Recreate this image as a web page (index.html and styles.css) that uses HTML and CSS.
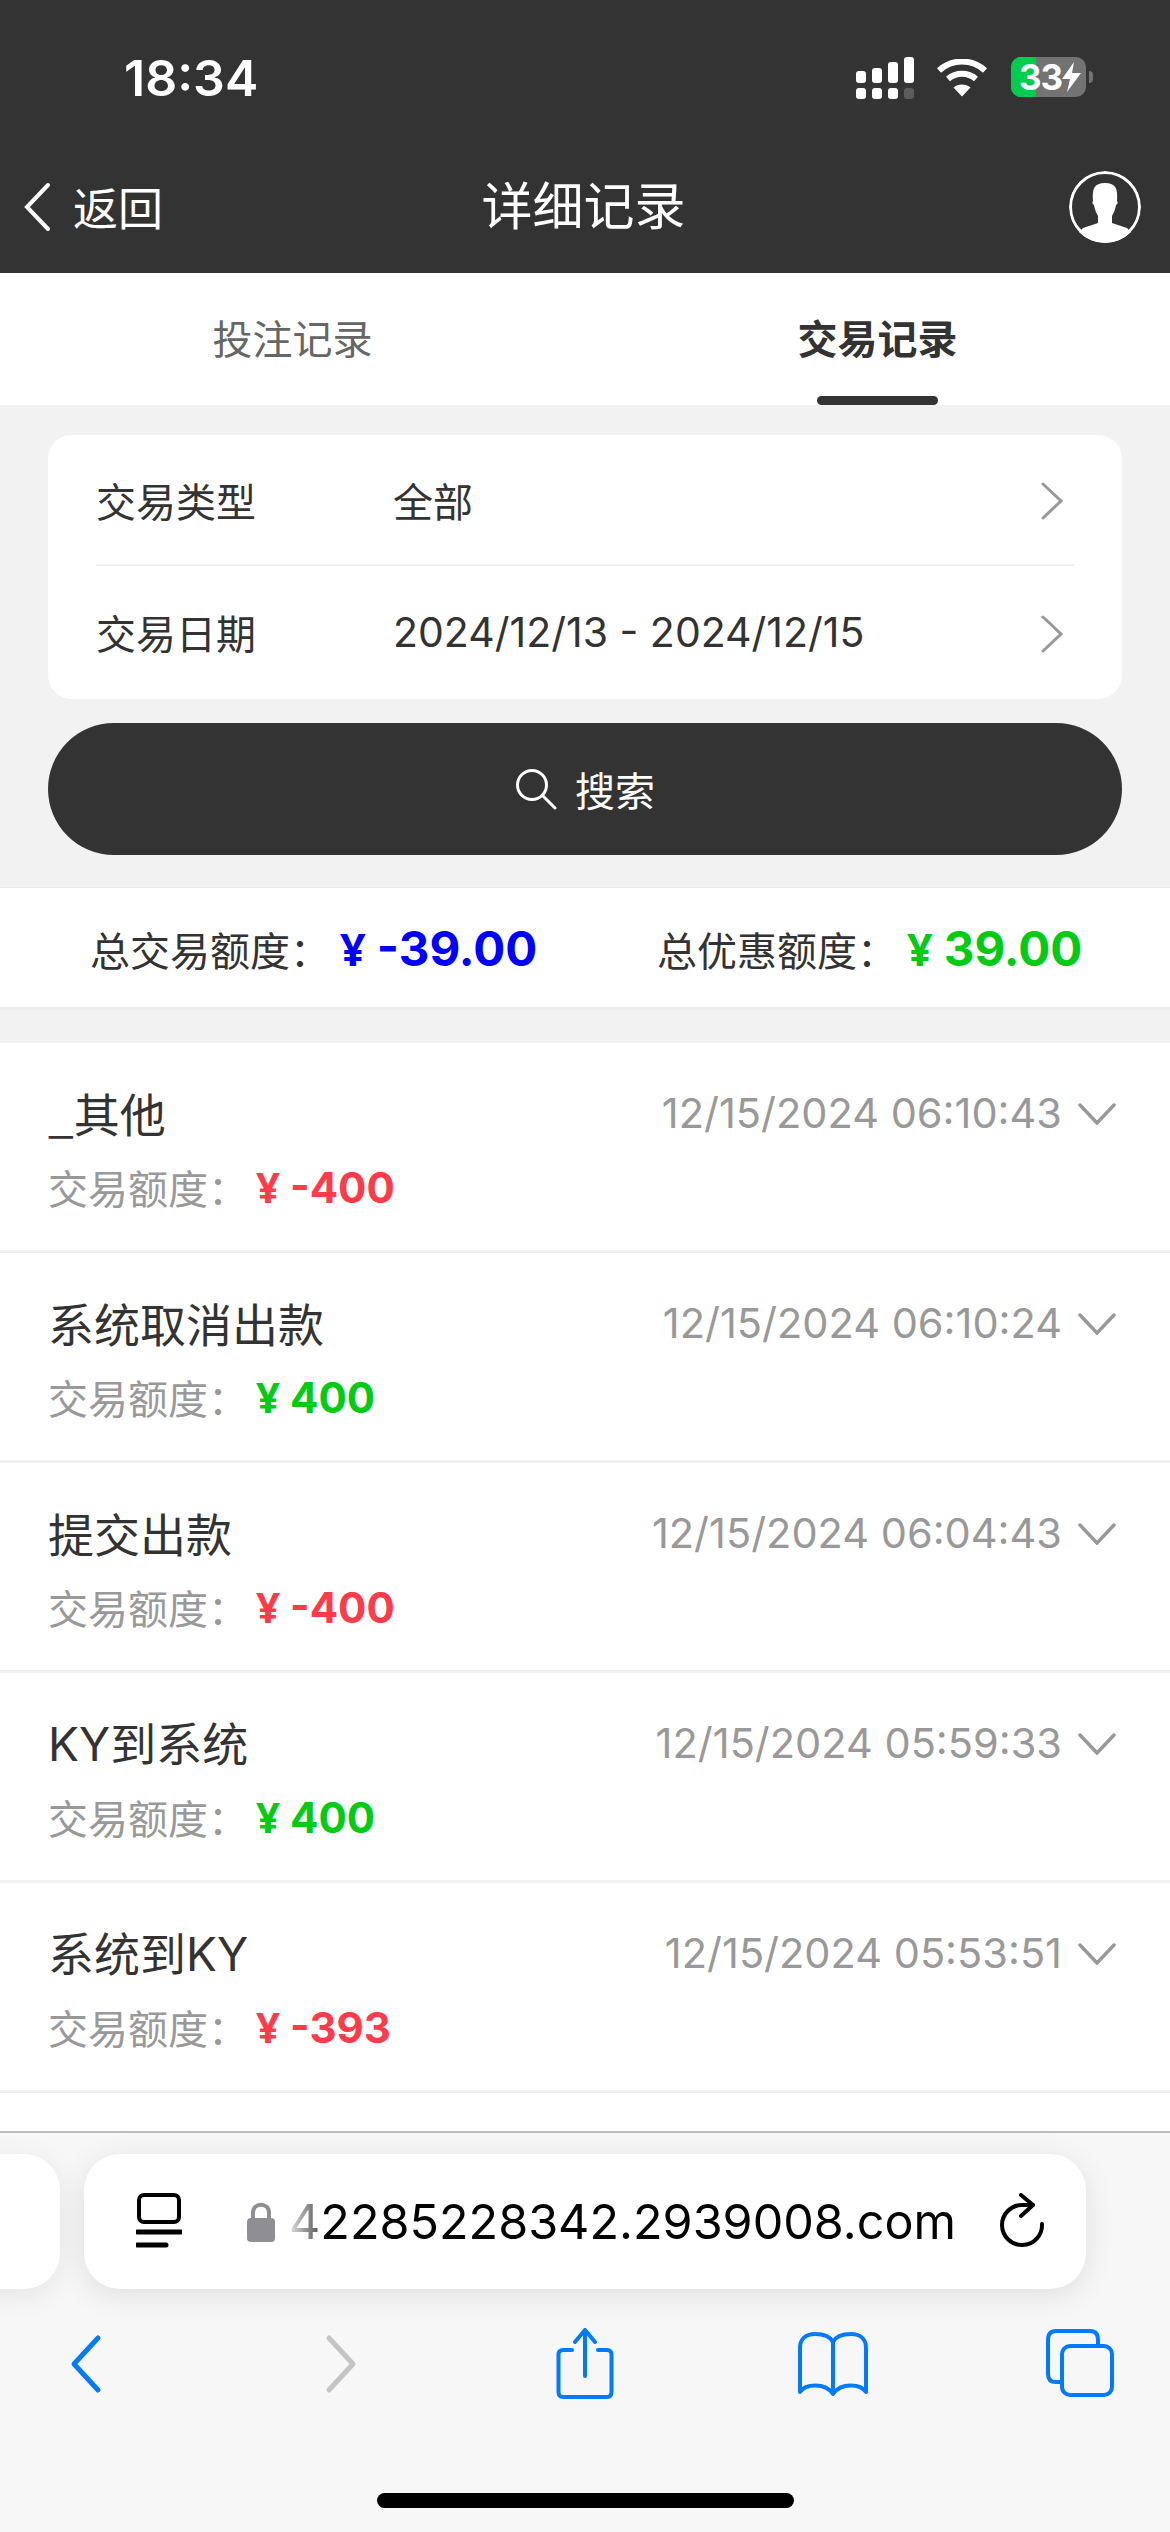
FILE: index.html
```html
<!DOCTYPE html>
<html lang="zh-CN">
<head>
    <meta charset="UTF-8">
    <meta name="viewport" content="width=device-width, initial-scale=1.0">
    <title>详细记录</title>
    <link rel="stylesheet" href="styles.css">
</head>
<body>
    <div class="app-container">
        <!-- Header -->
        <header class="app-header">
            <div class="status-bar">
                <span class="status-time">18:34</span>
                <div class="status-icons">
                    <svg class="icon-signal" width="60" height="42" viewBox="0 0 60 42" fill="#fff">
                        <rect x="0" y="14" width="10" height="12" rx="3"/>
                        <rect x="16" y="11" width="10" height="15" rx="3"/>
                        <rect x="32" y="5" width="10" height="21" rx="3"/>
                        <rect x="48" y="0" width="10" height="26" rx="3"/>
                        <rect x="0" y="31" width="10" height="11" rx="3"/>
                        <rect x="16" y="31" width="10" height="11" rx="3"/>
                        <rect x="32" y="31" width="10" height="11" rx="3"/>
                        <rect x="48" y="31" width="10" height="11" rx="3" fill="#5c5c5c"/>
                    </svg>
                    <svg class="icon-wifi" width="52" height="38" viewBox="0 0 52 38" fill="none" stroke="#fff" stroke-width="6">
                        <path d="M3 11.500C16 -0.500 36 -0.500 49 11.500"/>
                        <path d="M12 20C20 13 32 13 40 20"/>
                        <path d="M26 37.500L17.500 28.500C22 24.500 30 24.500 34.500 28.500Z" fill="#fff" stroke="none"/>
                    </svg>
                    <div class="battery">
                        <div class="battery-body">
                            <span class="battery-level"></span>
                            <span class="battery-num">33</span>
                            <svg width="20" height="30" viewBox="0 0 20 30" fill="#fff"><path d="M12 0L0 17H8L5 30L19 11H10Z"/></svg>
                        </div>
                        <span class="battery-nub"></span>
                    </div>
                </div>
            </div>
            <nav class="nav-bar">
                <div class="nav-back">
                    <svg width="28" height="50" viewBox="0 0 28 50" fill="none" stroke="#fff" stroke-width="4" stroke-linecap="round">
                        <path d="M25 3L4 25L25 47"/>
                    </svg>
                    <span>返回</span>
                </div>
                <h1 class="nav-title">详细记录</h1>
                <svg class="nav-user" width="72" height="72" viewBox="0 0 72 72">
                    <defs><clipPath id="userClip"><circle cx="36" cy="36" r="36"/></clipPath></defs>
                    <g clip-path="url(#userClip)">
                        <circle cx="36" cy="36" r="34.500" fill="none" stroke="#fff" stroke-width="3"/>
                        <path d="M36 12C25 12 23 18 24 30C23 31 23 33 25 34C26 40 28 43 29 45V52L14 57L0 72H72L58 57L43 52V45C44 43 46 40 47 34C49 33 49 31 48 30C49 18 47 12 36 12Z" fill="#fff"/>
                    </g>
                </svg>
            </nav>
        </header>

        <!-- Tabs -->
        <div class="tabs">
            <div class="tab">投注记录</div>
            <div class="tab active">交易记录</div>
        </div>

        <!-- Search form -->
        <section class="search-panel">
            <div class="filter-card">
                <div class="filter-row">
                    <span class="filter-label">交易类型</span>
                    <span class="filter-value">全部</span>
                    <svg class="filter-arrow" width="22" height="38" viewBox="0 0 22 38" fill="none" stroke="#999" stroke-width="3" stroke-linecap="round"><path d="M2 2L20 19L2 36"/></svg>
                </div>
                <div class="filter-row">
                    <span class="filter-label">交易日期</span>
                    <span class="filter-value filter-date">2024/12/13 - 2024/12/15</span>
                    <svg class="filter-arrow" width="22" height="38" viewBox="0 0 22 38" fill="none" stroke="#999" stroke-width="3" stroke-linecap="round"><path d="M2 2L20 19L2 36"/></svg>
                </div>
            </div>
            <button class="search-btn">
                <svg width="42" height="42" viewBox="0 0 42 42" fill="none" stroke="#fff" stroke-width="3" stroke-linecap="round">
                    <circle cx="17" cy="17" r="14.500"/>
                    <path d="M27.500 27.500L40 40"/>
                </svg>
                <span>搜索</span>
            </button>
        </section>

        <!-- Totals -->
        <div class="summary">
            <div class="summary-item summary-left">
                <span class="summary-label">总交易额度：</span>
                <span class="summary-amount blue"><i>¥</i>-39.00</span>
            </div>
            <div class="summary-item">
                <span class="summary-label">总优惠额度：</span>
                <span class="summary-amount green"><i>¥</i>39.00</span>
            </div>
        </div>

        <!-- Records -->
        <main class="record-list">
            <div class="record">
                <div class="record-top">
                    <span class="record-title">_其他</span>
                    <span class="record-time">12/15/2024 06:10:43</span>
                    <svg class="record-arrow" width="38" height="22" viewBox="0 0 38 22" fill="none" stroke="#999" stroke-width="3.500" stroke-linecap="round"><path d="M2 2L19 20L36 2"/></svg>
                </div>
                <div class="record-sub">交易额度：<span class="record-amount red"><i>¥</i>-400</span></div>
            </div>
            <div class="record">
                <div class="record-top">
                    <span class="record-title">系统取消出款</span>
                    <span class="record-time">12/15/2024 06:10:24</span>
                    <svg class="record-arrow" width="38" height="22" viewBox="0 0 38 22" fill="none" stroke="#999" stroke-width="3.500" stroke-linecap="round"><path d="M2 2L19 20L36 2"/></svg>
                </div>
                <div class="record-sub">交易额度：<span class="record-amount green"><i>¥</i>400</span></div>
            </div>
            <div class="record">
                <div class="record-top">
                    <span class="record-title">提交出款</span>
                    <span class="record-time">12/15/2024 06:04:43</span>
                    <svg class="record-arrow" width="38" height="22" viewBox="0 0 38 22" fill="none" stroke="#999" stroke-width="3.500" stroke-linecap="round"><path d="M2 2L19 20L36 2"/></svg>
                </div>
                <div class="record-sub">交易额度：<span class="record-amount red"><i>¥</i>-400</span></div>
            </div>
            <div class="record">
                <div class="record-top">
                    <span class="record-title"><span class="latin">KY</span>到系统</span>
                    <span class="record-time">12/15/2024 05:59:33</span>
                    <svg class="record-arrow" width="38" height="22" viewBox="0 0 38 22" fill="none" stroke="#999" stroke-width="3.500" stroke-linecap="round"><path d="M2 2L19 20L36 2"/></svg>
                </div>
                <div class="record-sub">交易额度：<span class="record-amount green"><i>¥</i>400</span></div>
            </div>
            <div class="record">
                <div class="record-top">
                    <span class="record-title">系统到<span class="latin">KY</span></span>
                    <span class="record-time">12/15/2024 05:53:51</span>
                    <svg class="record-arrow" width="38" height="22" viewBox="0 0 38 22" fill="none" stroke="#999" stroke-width="3.500" stroke-linecap="round"><path d="M2 2L19 20L36 2"/></svg>
                </div>
                <div class="record-sub">交易额度：<span class="record-amount red"><i>¥</i>-393</span></div>
            </div>
        </main>

        <!-- Browser toolbar -->
        <footer class="browser-bar">
            <div class="url-row">
                <div class="url-side"></div>
                <div class="url-pill">
                    <svg class="url-reader" width="46" height="56" viewBox="0 0 46 56" fill="none" stroke="#000" stroke-width="4">
                        <rect x="3" y="2" width="40" height="27" rx="5"/>
                        <path d="M1 39H45" stroke-width="5" stroke-linecap="round"/>
                        <path d="M1 52H30" stroke-width="5" stroke-linecap="round"/>
                    </svg>
                    <svg class="url-lock" width="28" height="40" viewBox="0 0 28 40">
                        <path d="M6 18V11C6 0 22 0 22 11V18" fill="none" stroke="#8e8e93" stroke-width="4"/>
                        <rect x="0" y="16" width="28" height="24" rx="4" fill="#8e8e93"/>
                    </svg>
                    <span class="url-text"><span class="url-fade">4</span>2285228342.2939008.com</span>
                    <svg class="url-reload" width="46" height="56" viewBox="0 0 46 56" fill="none" stroke="#000" stroke-width="4" stroke-linecap="round" stroke-linejoin="round">
                        <path d="M42 31A20 20 0 1 1 22 12H33"/>
                        <path d="M21 2L33 12L21 23"/>
                    </svg>
                </div>
            </div>
            <div class="browser-tools">
                <svg width="72" height="72" viewBox="0 0 72 72" fill="none" stroke="#007aff" stroke-width="5" stroke-linecap="round" stroke-linejoin="round">
                    <path d="M44 10L20 36L44 62"/>
                </svg>
                <svg width="72" height="72" viewBox="0 0 72 72" fill="none" stroke="#c4c4c6" stroke-width="5" stroke-linecap="round" stroke-linejoin="round">
                    <path d="M27 10L51 36L27 62"/>
                </svg>
                <svg width="72" height="72" viewBox="0 0 72 72" fill="none" stroke="#007aff" stroke-width="4" stroke-linecap="round" stroke-linejoin="round">
                    <path d="M23 22H14C11 22 9.500 24 9.500 26V64C9.500 67 11 69 14 69H58C61 69 62.500 67 62.500 64V26C62.500 24 61 22 58 22H49"/>
                    <path d="M36 48V2M26 14L36 2L46 14"/>
                </svg>
                <svg width="72" height="72" viewBox="0 0 72 72" fill="none" stroke="#007aff" stroke-width="4" stroke-linejoin="round">
                    <path d="M36 14C33 8 26 6 18 6C8 6 3 12 3 20V64C8 56 28 54 36 66C44 54 64 56 69 64V20C69 12 64 6 54 6C46 6 39 8 36 14V64"/>
                </svg>
                <svg width="72" height="72" viewBox="0 0 72 72" fill="none" stroke="#007aff" stroke-width="4" stroke-linejoin="round">
                    <path d="M16 54H12C6 54 4 51 4 46V12C4 6 7 3 12 3H46C51 3 54 6 54 12V16"/>
                    <rect x="18" y="18" width="50" height="49" rx="8"/>
                </svg>
            </div>
            <div class="home-bar"></div>
        </footer>
    </div>
</body>
</html>
```

FILE: styles.css
```css
* {
    margin: 0;
    padding: 0;
    box-sizing: border-box;
}

body {
    font-family: "Noto Sans CJK SC", "Noto Sans", sans-serif;
    background: #f2f2f2;
    color: #333;
    overflow: hidden;
}

.app-container {
    height: 2532px;
    display: flex;
    flex-direction: column;
}

/* Header */
.app-header {
    height: 273px;
    background: #333;
    color: #fff;
    flex-shrink: 0;
}

.status-bar {
    height: 120px;
    padding: 0 77px 0 124px;
    display: flex;
    justify-content: space-between;
}

.status-time {
    margin-top: 50px;
    font-family: Inter, sans-serif;
    font-size: 50px;
    line-height: 56px;
    font-weight: 600;
}

.status-icons {
    display: flex;
    align-items: flex-start;
    padding-top: 57px;
}

.icon-signal {
    margin-right: 20px;
}

.icon-wifi {
    margin-top: 2px;
    margin-right: 23px;
}

.battery {
    display: flex;
    align-items: center;
    height: 40px;
}

.battery-body {
    position: relative;
    width: 75px;
    height: 40px;
    border-radius: 10px;
    background: #737373;
    overflow: hidden;
    display: flex;
    align-items: center;
    padding-left: 8px;
}

.battery-level {
    position: absolute;
    left: 0;
    top: 0;
    bottom: 0;
    width: 25px;
    background: #00cc4e;
}

.battery-num {
    position: relative;
    font-family: Inter, sans-serif;
    font-size: 35px;
    font-weight: 700;
    line-height: 40px;
    letter-spacing: -1px;
}

.battery-body svg {
    position: relative;
    flex-shrink: 0;
}

.battery-nub {
    width: 4px;
    height: 12px;
    margin-left: 3px;
    border-radius: 0 4px 4px 0;
    background: #737373;
}

.nav-bar {
    height: 153px;
    padding: 0 29px 0 23px;
    display: flex;
    align-items: flex-start;
    justify-content: space-between;
    position: relative;
}

.nav-back {
    display: flex;
    align-items: center;
    gap: 22px;
    margin-top: 62px;
    height: 50px;
    font-size: 45px;
    line-height: 50px;
}

.nav-title {
    position: absolute;
    left: 0;
    right: 0;
    top: 53px;
    text-align: center;
    font-size: 51px;
    line-height: 60px;
    font-weight: 400;
    padding-right: 3px;
}

.nav-user {
    margin-top: 51px;
}

/* Tabs */
.tabs {
    height: 132px;
    background: #fff;
    display: flex;
    flex-shrink: 0;
}

.tab {
    width: 50%;
    text-align: center;
    font-size: 40px;
    line-height: 48px;
    padding-top: 40px;
    color: #666;
    position: relative;
}

.tab.active {
    color: #333;
    font-weight: 700;
}

.tab.active::after {
    content: "";
    position: absolute;
    left: 232px;
    bottom: 0;
    width: 121px;
    height: 9px;
    border-radius: 5px;
    background: #333;
}

/* Search form */
.search-panel {
    padding: 30px 48px 32px;
    flex-shrink: 0;
}

.filter-card {
    background: #fff;
    border-radius: 24px;
    padding: 0 48px 1px;
}

.filter-row {
    height: 132px;
    display: flex;
    align-items: center;
    font-size: 40px;
    line-height: 48px;
}

.filter-row:first-child {
    height: 131px;
    border-bottom: 2px solid #f0f0f0;
}

.filter-label {
    width: 297px;
}

.filter-value {
    flex: 1;
}

.filter-date {
    font-family: Inter, sans-serif;
    font-size: 41px;
}

.filter-arrow {
    margin-right: 11px;
    margin-top: 3px;
}

.search-btn {
    width: 100%;
    height: 132px;
    margin-top: 24px;
    border: none;
    border-radius: 66px;
    background: #333;
    color: #fff;
    font-family: inherit;
    font-size: 40px;
    display: flex;
    align-items: center;
    justify-content: center;
    gap: 18px;
}

/* Totals */
.summary {
    height: 123px;
    background: #fff;
    border-top: 1px solid #eaeaea;
    border-bottom: 3px solid #ececec;
    display: flex;
    align-items: center;
    flex-shrink: 0;
}

.summary-item {
    display: flex;
    align-items: center;
}

.summary-left {
    width: 657px;
    padding-left: 90px;
}

.summary-label {
    font-size: 40px;
    width: 250px;
    color: #333;
    padding-top: 2px;
}

.summary-amount {
    font-family: Inter, sans-serif;
    font-size: 47.500px;
    font-weight: 700;
    line-height: 60px;
    padding-top: 2px;
    white-space: nowrap;
}

.summary-amount i {
    font-family: "Noto Sans", sans-serif;
    font-style: normal;
    font-size: 45px;
    margin-right: 11px;
}

.blue { color: #0000ff; }
.green { color: #00cc14; }
.red { color: #ff3b4a; }

/* Records */
.record-list {
    flex: 1;
    margin-top: 33px;
    background: #fff;
    overflow: hidden;
}

.record {
    height: 210px;
    padding: 45px 54px 0 48px;
    border-bottom: 3px solid #eef0f3;
}

.record-top {
    display: flex;
    align-items: center;
    height: 48px;
}

.record-title {
    flex: 1;
    font-size: 46px;
    line-height: 48px;
}

.latin {
    font-family: Inter, sans-serif;
}

.record-time {
    font-family: Inter, sans-serif;
    font-size: 41.500px;
    line-height: 48px;
    color: #999;
    margin-top: 2px;
}

.record-arrow {
    margin-left: 16px;
    margin-top: 4px;
}

.record-sub {
    margin-top: 25px;
    font-size: 40px;
    line-height: 48px;
    color: #999;
    display: flex;
    align-items: center;
}

.record-amount {
    font-family: Inter, sans-serif;
    font-size: 42px;
    font-weight: 700;
    margin-left: 8px;
    padding-top: 2px;
}

.record-amount i {
    font-family: "Noto Sans", sans-serif;
    font-style: normal;
    font-size: 42px;
    margin-right: 10px;
}

/* Browser toolbar */
.browser-bar {
    height: 401px;
    flex-shrink: 0;
    background: #f7f7f8;
    border-top: 2px solid #bdbdbd;
    display: flex;
    flex-direction: column;
}

.url-row {
    display: flex;
    gap: 24px;
    margin-top: 21px;
    margin-left: -140px;
}

.url-side {
    width: 200px;
    height: 135px;
    background: #fff;
    border-radius: 36px;
    box-shadow: 0 6px 30px rgba(0, 0, 0, 0.08);
}

.url-pill {
    width: 1002px;
    height: 135px;
    background: #fff;
    border-radius: 36px;
    box-shadow: 0 6px 30px rgba(0, 0, 0, 0.1);
    display: flex;
    align-items: center;
    padding-left: 52px;
}

.url-reader {
    margin-top: -2px;
}

.url-lock {
    margin-left: 65px;
    margin-right: 14px;
}

.url-text {
    font-family: Inter, sans-serif;
    font-size: 48.500px;
    line-height: 60px;
    color: #000;
    white-space: nowrap;
}

.url-fade {
    background: linear-gradient(90deg, #e2e2e2, #555);
    -webkit-background-clip: text;
    -webkit-text-fill-color: transparent;
}

.url-reload {
    margin-left: 44px;
    margin-top: -2px;
}

.browser-tools {
    margin-top: 39px;
    padding: 0 54px;
    display: flex;
    justify-content: space-between;
}

.home-bar {
    width: 417px;
    height: 15px;
    margin: auto auto 24px;
    border-radius: 8px;
    background: #000;
}
```
